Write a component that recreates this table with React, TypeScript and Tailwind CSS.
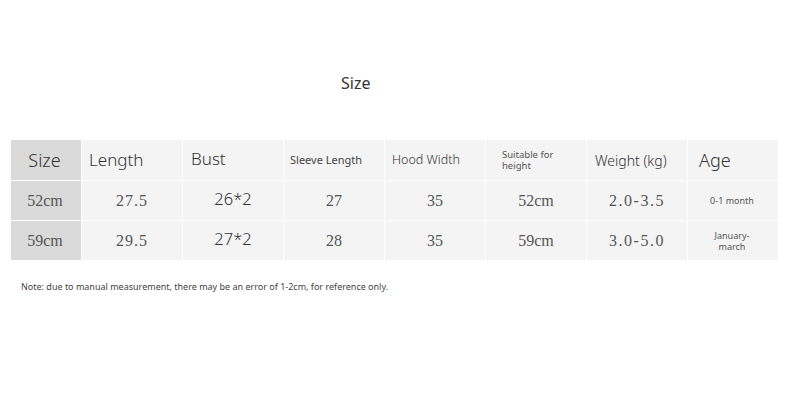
import React from "react";

const sans = { fontFamily: '"Noto Sans", "Open Sans", sans-serif' };
const serif = { fontFamily: '"Liberation Serif", "DejaVu Serif", serif' };

function Cell({ children, first, className = "" }: { children?: React.ReactNode; first?: boolean; className?: string }) {
  return (
    <div className={`${first ? "bg-[#dadada]" : "bg-[#f4f4f4]"} flex items-center ${className}`}>
      {children}
    </div>
  );
}

export default function App() {
  const serifCell = "justify-center text-[16px] text-[#555]";
  return (
    <div className="w-[790px] h-[410px] bg-white text-[#333] overflow-hidden" style={sans}>
      <div className="pt-[71px] pl-[341px] h-[95px]">
        <span className="text-[16px] leading-[24px] text-[#333]">Size</span>
      </div>
      <div className="mt-[45px] ml-[11px] grid grid-cols-[70px_100px_100px_100px_100px_100px_100px_90px] grid-rows-[40px_39px_39px] gap-[1px] w-[768px]">
        {/* header */}
        <Cell first className="justify-center text-[18px] font-light"><span className="mr-[3px]">Size</span></Cell>
        <Cell className="pl-[7px] text-[17px] font-light">Length</Cell>
        <Cell className="pl-[8px] text-[17px] font-light"><span className="-mt-[3px]">Bust</span></Cell>
        <Cell className="pl-[6px] text-[11px] text-[#444]">Sleeve Length</Cell>
        <Cell className="pl-[7px] text-[12.5px] font-light">Hood Width</Cell>
        <Cell className="pl-[16px] text-[9.5px] leading-[11px] text-[#555]">
          <span>Suitable for<br />height</span>
        </Cell>
        <Cell className="pl-[8px] text-[14px] font-light">Weight (kg)</Cell>
        <Cell className="pl-[11px] text-[18px] font-light">Age</Cell>

        {/* row 1 */}
        <Cell first className={serifCell}><span style={serif} className="mr-[2px]">52cm</span></Cell>
        <Cell className={serifCell}><span style={serif} className="tracking-[1px]">27.5</span></Cell>
        <Cell className="justify-center text-[16.5px] font-light"><span className="-mt-[2px]">26*2</span></Cell>
        <Cell className={serifCell}><span style={serif}>27</span></Cell>
        <Cell className={serifCell}><span style={serif}>35</span></Cell>
        <Cell className={serifCell}><span style={serif}>52cm</span></Cell>
        <Cell className={serifCell}><span style={serif} className="tracking-[1.5px]">2.0-3.5</span></Cell>
        <Cell className="justify-center text-[9px] text-[#555]"><span className="mr-[2px]">0-1 month</span></Cell>

        {/* row 2 */}
        <Cell first className={serifCell}><span style={serif} className="mr-[2px]">59cm</span></Cell>
        <Cell className={serifCell}><span style={serif} className="tracking-[1px]">29.5</span></Cell>
        <Cell className="justify-center text-[16.5px] font-light"><span className="-mt-[2px]">27*2</span></Cell>
        <Cell className={serifCell}><span style={serif}>28</span></Cell>
        <Cell className={serifCell}><span style={serif}>35</span></Cell>
        <Cell className={serifCell}><span style={serif}>59cm</span></Cell>
        <Cell className={serifCell}><span style={serif} className="tracking-[1.5px]">3.0-5.0</span></Cell>
        <Cell className="justify-center text-[9px] leading-[11px] text-[#555] text-center">
          <span className="mr-[2px]">January-<br />march</span>
        </Cell>
      </div>
      <div className="mt-[21px] ml-[21px] text-[9px] leading-[12px] text-[#444]">
        Note: due to manual measurement, there may be an error of 1-2cm, for reference only.
      </div>
    </div>
  );
}
